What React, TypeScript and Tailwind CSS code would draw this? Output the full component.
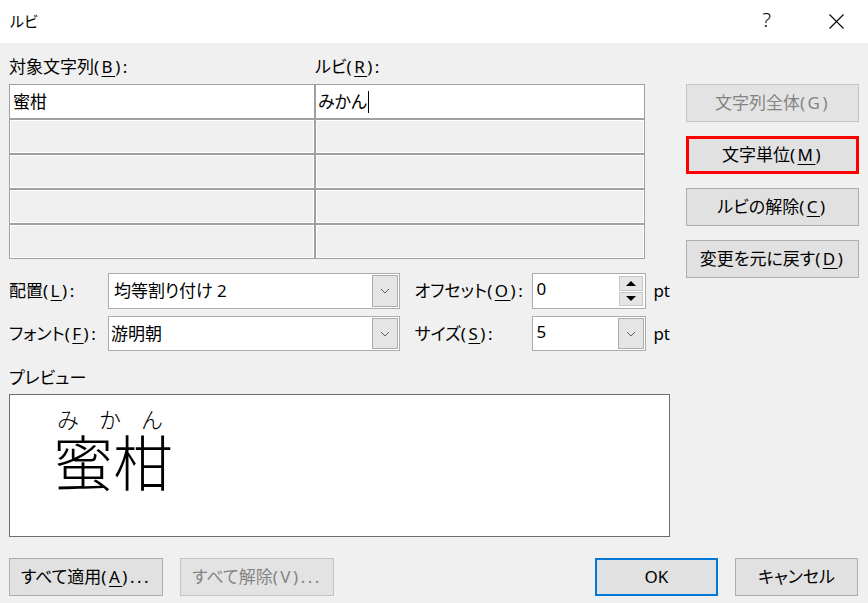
import React from 'react';

const font = "font-['Noto_Sans','Noto_Sans_CJK_JP',sans-serif] [font-feature-settings:'palt']";

function Chevron() {
  return (
    <svg width="10" height="6" viewBox="0 0 10 6" className="text-[#606060]">
      <polyline points="1,1 5,5 9,1" fill="none" stroke="currentColor" strokeWidth="1" />
    </svg>
  );
}

function DropBtn() {
  return (
    <div className="w-[26px] self-stretch bg-[#e5e5e5] border border-[#acacac] flex items-center justify-center">
      <Chevron />
    </div>
  );
}

function Btn({
  children,
  className = '',
  disabled = false,
}: {
  children: React.ReactNode;
  className?: string;
  disabled?: boolean;
}) {
  return (
    <button
      className={`h-[38px] flex items-center justify-center text-[17px] leading-[24px] ${
        disabled ? 'bg-[#e3e3e3] border border-[#c4c4c4] text-[#838383]' : 'bg-[#e1e1e1] border border-[#adadad] text-black'
      } ${className}`}
    >
      {children}
    </button>
  );
}

// text with access key in parens, e.g. 配置(L):
function Key({ t, k, after = '', under = true }: { t: string; k: string; after?: string; under?: boolean }) {
  return (
    <span>
      {t}
      <span className="tracking-[2.5px]">
        (<span className={under ? 'underline underline-offset-[3px] decoration-1' : ''}>{k}</span>){after}
      </span>
    </span>
  );
}

export default function App() {
  return (
    <div className={`w-[868px] h-[603px] bg-[#f0f0f0] overflow-hidden text-black ${font}`}>
      {/* title bar */}
      <div className="h-[43px] bg-white flex items-center pl-[10px] pr-[24px]">
        <span className="text-[15px] leading-[20px] -mt-[2px]">ルビ</span>
        <span className="ml-auto text-[20px] leading-[20px] -mt-[3px] font-light">?</span>
        <svg width="15" height="15" viewBox="0 0 15 15" className="ml-[58px] -mt-[1px]">
          <path d="M0.5 0.5 L14.5 14.5 M14.5 0.5 L0.5 14.5" stroke="#000" strokeWidth="1.1" fill="none" />
        </svg>
      </div>

      <div className="flex pl-[9px]">
        <div className="w-[661px] flex flex-col">
          <div className="h-[41px] pt-[7px] flex items-center text-[17px] leading-[24px]">
            <span className="w-[306px]">
              <Key t="対象文字列" k="B" after=":" />
            </span>
            <Key t="ルビ" k="R" after=":" />
          </div>

          <div className="w-[636px] grid grid-cols-[304px_328px] auto-rows-[33px] gap-[2px] p-[1px] bg-[#a0a0a0]">
            <div className="bg-white flex items-center pl-[3px] text-[17px] leading-[24px]">蜜柑</div>
            <div className="bg-white flex items-center pl-[2px] text-[17px] leading-[24px]">
              みかん
              <span className="inline-block w-px h-[22px] bg-black ml-[1px]" />
            </div>
            {Array.from({ length: 8 }).map((_, i) => (
              <div key={i} className="bg-[#f0f0f0] border border-white" />
            ))}
          </div>

          <div className="mt-[14px] flex flex-col gap-[7px] text-[17px] leading-[24px]">
            <div className="flex items-center">
              <span className="w-[99px]">
                <Key t="配置" k="L" after=":" />
              </span>
              <div className="w-[292px] h-[36px] bg-white border border-[#acacac] flex p-px">
                <span className="flex-1 pl-[4px] flex items-center">均等割り付け 2</span>
                <DropBtn />
              </div>
              <span className="ml-[15px] w-[117px]">
                <Key t="オフセット" k="O" after=":" />
              </span>
              <div className="w-[115px] h-[36px] bg-white border border-[#acacac] flex p-[2px]">
                <span className="flex-1 pl-[2px] -mt-[4px] flex items-center">0</span>
                <div className="w-[24px] flex flex-col gap-px">
                  <div className="flex-1 bg-[#e5e5e5] border border-[#c8c8c8] flex items-center justify-center">
                    <svg width="10" height="5" viewBox="0 0 10 5">
                      <polygon points="0,5 5,0 10,5" fill="#000" />
                    </svg>
                  </div>
                  <div className="flex-1 bg-[#e5e5e5] border border-[#c8c8c8] flex items-center justify-center">
                    <svg width="10" height="5" viewBox="0 0 10 5">
                      <polygon points="0,0 10,0 5,5" fill="#000" />
                    </svg>
                  </div>
                </div>
              </div>
              <span className="ml-[7px]">pt</span>
            </div>
            <div className="flex items-center">
              <span className="w-[99px]">
                <Key t="フォント" k="F" after=":" />
              </span>
              <div className="w-[292px] h-[35px] bg-white border border-[#acacac] flex p-px">
                <span className="flex-1 pl-[1px] flex items-center">游明朝</span>
                <DropBtn />
              </div>
              <span className="ml-[15px] w-[117px]">
                <Key t="サイズ" k="S" after=":" />
              </span>
              <div className="w-[115px] h-[35px] bg-white border border-[#acacac] flex p-px">
                <span className="flex-1 pl-[3px] -mt-[4px] flex items-center">5</span>
                <DropBtn />
              </div>
              <span className="ml-[7px]">pt</span>
            </div>
          </div>

          <div className="mt-[15px] text-[17px] leading-[24px]">プレビュー</div>
          <div className="mt-[4px] w-[661px] h-[143px] bg-white border border-[#6e6e6e] pl-[43px] pt-[13px]">
            <div className="inline-flex flex-col [font-feature-settings:normal]">
              <div className="flex gap-[20px] pl-[4px] text-[22px] leading-none font-light">
                <span>み</span>
                <span>か</span>
                <span>ん</span>
              </div>
              <div className="mt-[3px] text-[60px] leading-none font-light">蜜柑</div>
            </div>
          </div>
        </div>

        <div className="ml-[16px] pt-[41px] w-[173px] flex flex-col gap-[14px]">
          <Btn disabled>
            <Key t="文字列全体" k="G" under={false} />
          </Btn>
          <Btn className="!border-[3px] !border-[#ff0000]">
            <Key t="文字単位" k="M" />
          </Btn>
          <Btn>
            <Key t="ルビの解除" k="C" />
          </Btn>
          <Btn>
            <Key t="変更を元に戻す" k="D" />
          </Btn>
        </div>
      </div>

      <div className="flex pl-[9px] pr-[10px] mt-[21px]">
        <Btn className="w-[154px]">
          <Key t="すべて適用" k="A" after="..." />
        </Btn>
        <Btn disabled className="w-[154px] ml-[17px]">
          <Key t="すべて解除" k="V" after="..." under={false} />
        </Btn>
        <Btn className="w-[123px] ml-auto !border-2 !border-[#0078d7]">OK</Btn>
        <Btn className="w-[123px] ml-[17px]">キャンセル</Btn>
      </div>
    </div>
  );
}
